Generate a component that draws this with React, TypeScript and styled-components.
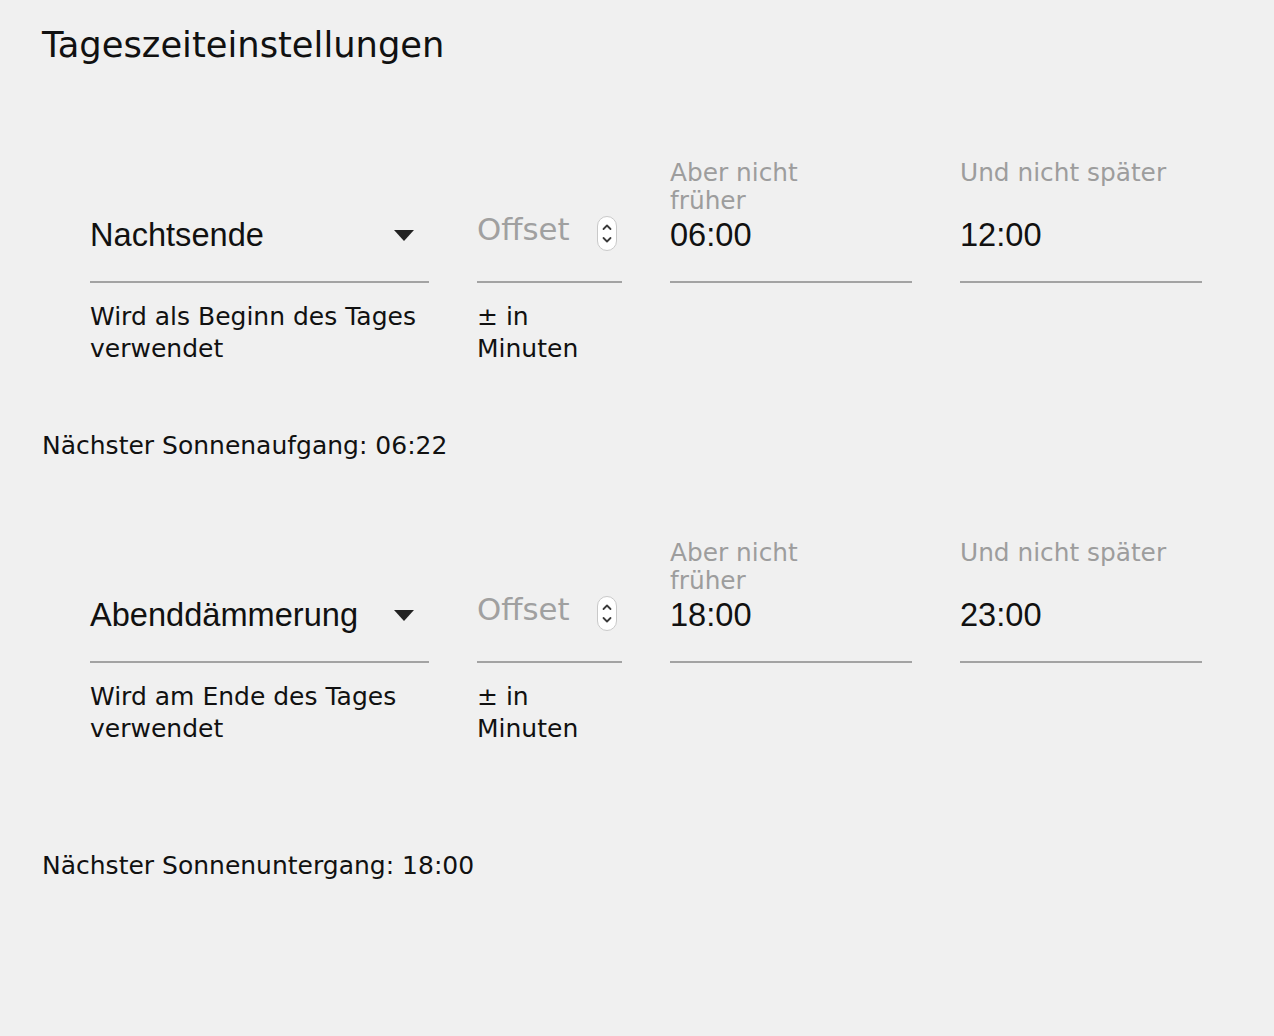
import React from 'react';
import styled, { createGlobalStyle } from 'styled-components';

const GlobalStyle = createGlobalStyle`
  html, body {
    margin: 0;
    padding: 0;
    background: #f0f0f0;
  }
  body {
    font-family: 'DejaVu Sans', Verdana, sans-serif;
    color: #111;
  }
`;

const Page = styled.div`
  min-height: 1036px;
  box-sizing: border-box;
  padding: 24px 0 0 42px;
  background: #f0f0f0;
`;

const Title = styled.h1`
  margin: 0;
  font-size: 35.3px;
  line-height: 42px;
  font-weight: 400;
  color: #111;
`;

const Section = styled.section<{ $top: number }>`
  margin-top: ${({ $top }) => $top}px;
`;

const FieldRow = styled.div`
  display: grid;
  grid-template-columns: 339px 145px 242px 242px;
  column-gap: 48px;
  padding-left: 48px;
`;

const Field = styled.div`
  display: flex;
  flex-direction: column;
`;

const FieldLabel = styled.div`
  height: 56px;
  font-size: 24.8px;
  line-height: 28px;
  color: #9d9d9d;
`;

const Control = styled.div`
  height: 66px;
  border-bottom: 2px solid #a3a3a3;
  display: flex;
  align-items: flex-start;
  justify-content: space-between;
`;

const Value = styled.span`
  font-family: 'Liberation Sans', Arial, sans-serif;
  font-size: 32.6px;
  line-height: 39px;
  color: #111;
`;

const Arrow = styled.span`
  width: 0;
  height: 0;
  margin: 15px 15px 0 0;
  border-left: 10px solid transparent;
  border-right: 10px solid transparent;
  border-top: 11px solid #222;
`;

const Placeholder = styled.span`
  font-size: 30.8px;
  line-height: 28px;
  color: #a0a0a0;
`;

const Spinner = styled.span`
  box-sizing: border-box;
  width: 20px;
  height: 35px;
  margin: 1px 5px 0 0;
  border: 1px solid #c9c9c9;
  border-radius: 10px;
  background: #fff;
  display: flex;
  align-items: center;
  justify-content: center;
`;

const Helper = styled.div`
  margin-top: 18px;
  font-size: 25px;
  line-height: 32px;
  color: #111;
`;

const SunInfo = styled.div<{ $top: number }>`
  margin-top: ${({ $top }) => $top}px;
  font-size: 25px;
  line-height: 32px;
  color: #111;
`;

const SpinnerIcon = () => (
  <svg width="12" height="25" viewBox="0 0 12 25" fill="none">
    <path d="M2.5 8 L6 4.5 L9.5 8" stroke="#3a3a3a" strokeWidth="1.8" strokeLinecap="round" strokeLinejoin="round" />
    <path d="M2.5 17 L6 20.5 L9.5 17" stroke="#3a3a3a" strokeWidth="1.8" strokeLinecap="round" strokeLinejoin="round" />
  </svg>
);

type DaySettingProps = {
  event: string;
  helper: [string, string];
  from: string;
  to: string;
};

const DaySetting = ({ event, helper, from, to }: DaySettingProps) => (
  <FieldRow>
    <Field>
      <FieldLabel />
      <Control>
        <Value>{event}</Value>
        <Arrow />
      </Control>
      <Helper>
        {helper[0]}
        <br />
        {helper[1]}
      </Helper>
    </Field>
    <Field>
      <FieldLabel />
      <Control>
        <Placeholder>Offset</Placeholder>
        <Spinner>
          <SpinnerIcon />
        </Spinner>
      </Control>
      <Helper>
        ± in
        <br />
        Minuten
      </Helper>
    </Field>
    <Field>
      <FieldLabel>
        Aber nicht
        <br />
        früher
      </FieldLabel>
      <Control>
        <Value>{from}</Value>
      </Control>
    </Field>
    <Field>
      <FieldLabel>Und nicht später</FieldLabel>
      <Control>
        <Value>{to}</Value>
      </Control>
    </Field>
  </FieldRow>
);

export default function App() {
  return (
    <Page>
      <GlobalStyle />
      <Title>Tageszeiteinstellungen</Title>
      <Section $top={93}>
        <DaySetting
          event="Nachtsende"
          helper={['Wird als Beginn des Tages', 'verwendet']}
          from="06:00"
          to="12:00"
        />
        <SunInfo $top={65}>Nächster Sonnenaufgang: 06:22</SunInfo>
      </Section>
      <Section $top={77}>
        <DaySetting
          event="Abenddämmerung"
          helper={['Wird am Ende des Tages', 'verwendet']}
          from="18:00"
          to="23:00"
        />
        <SunInfo $top={105}>Nächster Sonnenuntergang: 18:00</SunInfo>
      </Section>
    </Page>
  );
}
